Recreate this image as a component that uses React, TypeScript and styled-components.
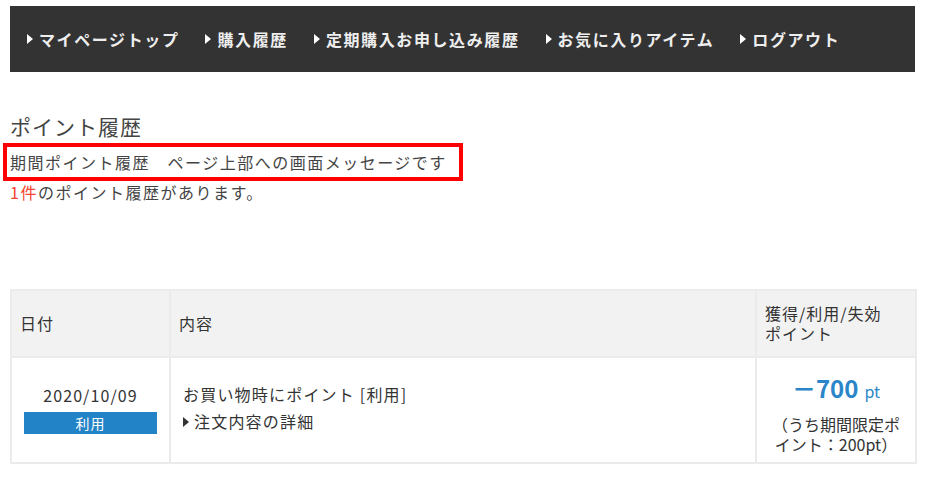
import * as React from "react";
import styled, { createGlobalStyle } from "styled-components";

const GlobalStyle = createGlobalStyle`
  body {
    margin: 0;
    background: #ffffff;
    font-family: "Noto Sans CJK JP", "Noto Sans", sans-serif;
    color: #333333;
  }
`;

const Page = styled.div`
  width: 905px;
  padding: 6px 0 0 10px;
`;

const Nav = styled.nav`
  height: 66px;
  background: #333333;
  display: flex;
  align-items: center;
  padding-left: 17px;
`;

const NavItem = styled.a`
  display: flex;
  align-items: center;
  margin-right: 26px;
  color: #eeeeee;
  font-size: 16px;
  font-weight: 700;
  letter-spacing: 1.6px;
  text-decoration: none;

  &::before {
    content: "";
    width: 0;
    height: 0;
    border-top: 5px solid transparent;
    border-bottom: 5px solid transparent;
    border-left: 6px solid #ffffff;
    margin-right: 6px;
  }
`;

const Title = styled.h2`
  margin: 38px 0 4px;
  font-size: 21px;
  font-weight: 400;
  line-height: 33px;
  letter-spacing: 1px;
  color: #444444;
`;

const Messages = styled.div`
  font-size: 16px;
  line-height: 30px;
  letter-spacing: 1.5px;
  color: #444444;
`;

const Highlight = styled.div`
  display: inline-block;
  margin-left: -3px;
  padding: 0 12px 0 3px;
  outline: 4px solid #ff0000;
`;

const Count = styled.span`
  color: #f4432e;
`;

const Table = styled.table`
  margin-top: 82px;
  width: 905px;
  border-collapse: collapse;
  table-layout: fixed;
  font-size: 16px;
  color: #333333;
`;

const Col = styled.col<{ $w: number }>`
  width: ${({ $w }) => $w}px;
`;

const HeadCell = styled.th`
  background: #f2f2f2;
  border: 2px solid #ebebeb;
  padding: 12px 8px 13px;
  text-align: left;
  font-weight: 400;
  line-height: 20px;
  letter-spacing: 1px;
`;

const Cell = styled.td<{ $center?: boolean; $px: number }>`
  border: 2px solid #ebebeb;
  padding: 8px ${({ $px }) => $px}px 12px;
  vertical-align: middle;
  text-align: ${({ $center }) => ($center ? "center" : "left")};
`;

const PointsCell = styled(Cell)`
  padding-top: 12px;
  padding-bottom: 8px;
`;

const DateText = styled.div`
  line-height: 26px;
  letter-spacing: 1.1px;
`;

const Badge = styled.div`
  margin-top: 4px;
  height: 22px;
  line-height: 22px;
  background: #2383c7;
  color: #ffffff;
  font-size: 14px;
  text-align: center;
  letter-spacing: 1px;
`;

const Line = styled.div`
  line-height: 27px;
  letter-spacing: 1.2px;
`;

const DetailLink = styled.a`
  display: flex;
  align-items: center;
  line-height: 27px;
  color: #333333;
  text-decoration: none;
  letter-spacing: 1.2px;

  &::before {
    content: "";
    width: 0;
    height: 0;
    border-top: 5px solid transparent;
    border-bottom: 5px solid transparent;
    border-left: 6px solid #333333;
    margin-right: 5px;
  }
`;

const Points = styled.div`
  color: #2a86c8;
  line-height: 36px;
  margin-bottom: 5px;
`;

const PointValue = styled.span`
  font-size: 24px;
  font-weight: 700;
`;

const PointUnit = styled.span`
  font-size: 16px;
  margin-left: 6px;
`;

const Note = styled.div`
  line-height: 20px;
`;

const navItems = [
  "マイページトップ",
  "購入履歴",
  "定期購入お申し込み履歴",
  "お気に入りアイテム",
  "ログアウト",
];

export default function App() {
  return (
    <>
      <GlobalStyle />
      <Page>
        <Nav>
          {navItems.map((item) => (
            <NavItem key={item} href="#">
              {item}
            </NavItem>
          ))}
        </Nav>

        <Title>ポイント履歴</Title>
        <Messages>
          <Highlight>期間ポイント履歴　ページ上部への画面メッセージです</Highlight>
          <div>
            <Count>1件</Count>のポイント履歴があります。
          </div>
        </Messages>

        <Table>
          <colgroup>
            <Col $w={159} />
            <Col $w={586} />
            <Col $w={160} />
          </colgroup>
          <thead>
            <tr>
              <HeadCell>日付</HeadCell>
              <HeadCell>内容</HeadCell>
              <HeadCell>
                獲得/利用/失効
                <br />
                ポイント
              </HeadCell>
            </tr>
          </thead>
          <tbody>
            <tr>
              <Cell $center $px={12}>
                <DateText>2020/10/09</DateText>
                <Badge>利用</Badge>
              </Cell>
              <Cell $px={12}>
                <Line>お買い物時にポイント [利用]</Line>
                <DetailLink href="#">注文内容の詳細</DetailLink>
              </Cell>
              <PointsCell $center $px={10}>
                <Points>
                  <PointValue>－700</PointValue>
                  <PointUnit>pt</PointUnit>
                </Points>
                <Note>（うち期間限定ポイント：200pt）</Note>
              </PointsCell>
            </tr>
          </tbody>
        </Table>
      </Page>
    </>
  );
}
